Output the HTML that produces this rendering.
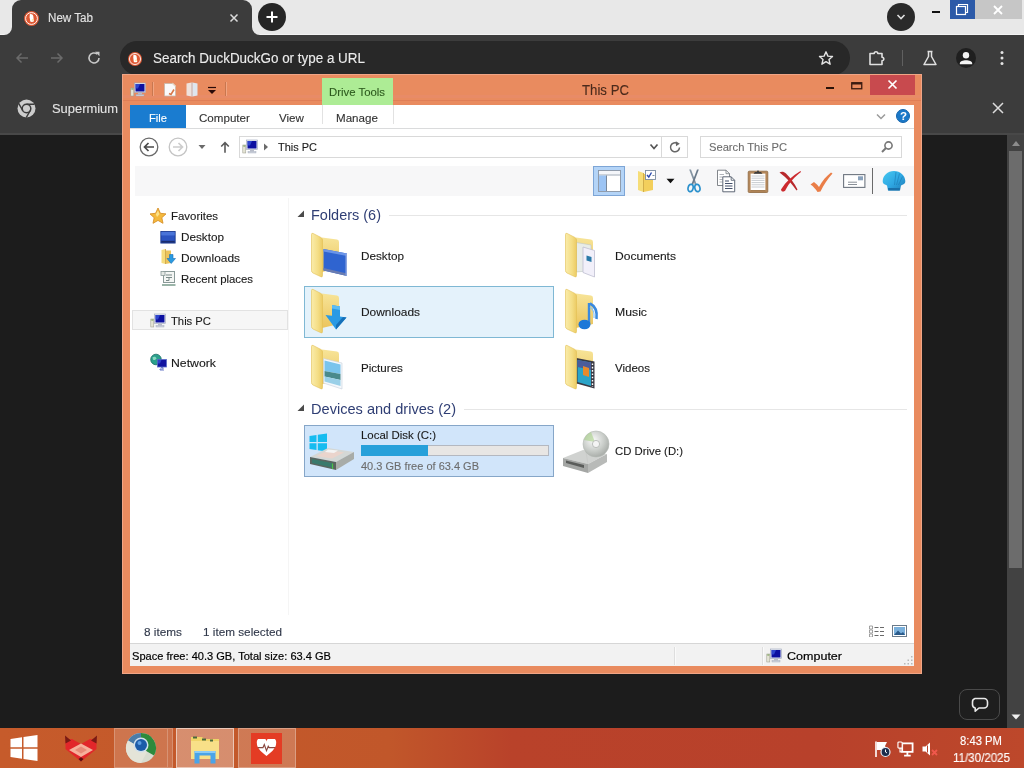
<!DOCTYPE html>
<html lang="en"><head><meta charset="utf-8"><title>This PC</title><style>
html,body{margin:0;padding:0;}
body{width:1024px;height:768px;overflow:hidden;background:#1c1c1c;position:relative;font-family:"Liberation Sans", sans-serif;}
div,svg,span{position:absolute;box-sizing:border-box;}
span{white-space:nowrap;line-height:1;transform-origin:0 50%;-webkit-text-stroke:0.12px currentColor;}
#root{left:0;top:0;width:1024px;height:768px;will-change:transform;overflow:hidden;}
</style></head>
<body>
<div id="root">
<!-- browser window -->
<div style="left:0px;top:0px;width:1024px;height:35px;background:#e8e8e8;"></div>
<div style="left:0px;top:34px;width:1024px;height:1px;background:#f3f3f3;"></div>
<div style="left:12px;top:0px;width:240px;height:35px;background:#3c3c3c;border-radius:9px 9px 0 0;"></div>
<svg style="left:4px;top:27px;" width="8" height="8" viewBox="0 0 8 8"><path d="M8 0V8H0A8 8 0 0 0 8 0Z" fill="#3c3c3c"/></svg>
<svg style="left:252px;top:27px;" width="8" height="8" viewBox="0 0 8 8"><path d="M0 0V8H8A8 8 0 0 1 0 0Z" fill="#3c3c3c"/></svg>
<div style="left:0px;top:35px;width:1024px;height:100px;background:#3c3c3c;"></div>
<div style="left:0px;top:133px;width:1024px;height:2px;background:#484848;"></div>
<svg style="left:24px;top:10.5px;" width="15" height="15" viewBox="0 0 16 16"><circle cx="8" cy="8" r="8" fill="#de5833"/><circle cx="8" cy="8" r="6.3" fill="none" stroke="#fff" stroke-width="1"/><path d="M6.2 3.4c1.6-.6 3.4.3 3.7 2l.7 5.6c-1.2.8-2.7.9-3.9.3L6 6.600z" fill="#fff"/><path d="M8.300 9.200l1.800-.5.200.8-1.900.6z" fill="#fbd04b"/></svg>
<span style="left:48px;top:11.84px;font-size:12px;color:#e4e4e4;transform:scaleX(0.9681);">New Tab</span>
<svg style="left:228px;top:12px;" width="12" height="12" viewBox="0 0 12 12"><path d="M2.500 2.500L9.500 9.500M9.500 2.500L2.500 9.500" stroke="#dcdcdc" stroke-width="1.500" fill="none"/></svg>
<div style="left:258px;top:3px;width:28px;height:28px;background:#262626;border-radius:50%;"></div>
<svg style="left:265px;top:10px;" width="14" height="14" viewBox="0 0 14 14"><path d="M7 1.500V12.500M1.500 7H12.500" stroke="#fff" stroke-width="2" fill="none"/></svg>
<div style="left:887px;top:3px;width:28px;height:28px;background:#2a2a2a;border-radius:50%;"></div>
<svg style="left:895px;top:12px;" width="12" height="10" viewBox="0 0 12 10"><path d="M2.500 3L6 6.500L9.500 3" stroke="#e0e0e0" stroke-width="1.600" fill="none"/></svg>
<div style="left:932px;top:11px;width:8px;height:2px;background:#111;"></div>
<div style="left:950px;top:0px;width:25px;height:19px;background:#2c5aa8;"></div>
<svg style="left:955px;top:3px;" width="14" height="13" viewBox="0 0 14 13"><path d="M3.500 3.500V1.500H12.500V9.500H10.500" stroke="#fff" stroke-width="1.200" fill="none"/><rect x="1.500" y="3.500" width="9" height="8" stroke="#fff" stroke-width="1.200" fill="none"/></svg>
<div style="left:975px;top:0px;width:47px;height:19px;background:#c6c6c6;"></div>
<svg style="left:992px;top:4px;" width="12" height="12" viewBox="0 0 12 12"><path d="M2 2L10 10M10 2L2 10" stroke="#fff" stroke-width="1.800" fill="none"/></svg>
<svg style="left:14px;top:50px;" width="16" height="16" viewBox="0 0 16 16"><path d="M14 8H3M7.500 3.500L3 8L7.500 12.500" stroke="#6b6b6b" stroke-width="1.500" fill="none"/></svg>
<svg style="left:49px;top:50px;" width="16" height="16" viewBox="0 0 16 16"><path d="M2 8H13M8.500 3.500L13 8L8.500 12.500" stroke="#6b6b6b" stroke-width="1.500" fill="none"/></svg>
<svg style="left:86px;top:50px;" width="16" height="16" viewBox="0 0 16 16"><path d="M13 8A5 5 0 1 1 11.300 4.200" stroke="#c8c8c8" stroke-width="1.600" fill="none"/><path d="M9 1.800H13.500V6.300z" fill="#c8c8c8"/></svg>
<div style="left:120px;top:41px;width:730px;height:34px;background:#282828;border-radius:17px;"></div>
<svg style="left:128px;top:51.5px;" width="14" height="14" viewBox="0 0 16 16"><circle cx="8" cy="8" r="8" fill="#de5833"/><circle cx="8" cy="8" r="6.3" fill="none" stroke="#fff" stroke-width="1"/><path d="M6.2 3.4c1.6-.6 3.4.3 3.7 2l.7 5.6c-1.2.8-2.7.9-3.9.3L6 6.600z" fill="#fff"/><path d="M8.300 9.200l1.800-.5.200.8-1.900.6z" fill="#fbd04b"/></svg>
<span style="left:153px;top:51.15px;font-size:14px;color:#ececec;transform:scaleX(0.9593);">Search DuckDuckGo or type a URL</span>
<svg style="left:818px;top:50px;" width="16" height="16" viewBox="0 0 16 16"><path d="M8 1.800L9.900 6.100L14.500 6.500L11 9.600L12.100 14.200L8 11.700L3.900 14.200L5 9.600L1.500 6.500L6.100 6.100Z" stroke="#e4e4e4" stroke-width="1.400" fill="none" stroke-linejoin="round"/></svg>
<svg style="left:867px;top:49px;" width="18" height="18" viewBox="0 0 18 18"><path d="M3 4.500H7.200A1.800 1.800 0 0 1 10.800 4.500H15V8.200A1.800 1.800 0 0 1 15 11.800V15.500H3Z" stroke="#e0e0e0" stroke-width="1.600" fill="none" stroke-linejoin="round"/></svg>
<div style="left:902px;top:50px;width:1px;height:16px;background:#606060;"></div>
<svg style="left:921px;top:49px;" width="18" height="18" viewBox="0 0 18 18"><path d="M6.500 2.500H11.500M7.500 2.500V7.500L3 15.500H15L10.500 7.500V2.500" stroke="#e0e0e0" stroke-width="1.500" fill="none" stroke-linejoin="round"/></svg>
<div style="left:956px;top:48px;width:20px;height:20px;background:#1f1f1f;border-radius:50%;"></div>
<svg style="left:956px;top:48px;" width="20" height="20" viewBox="0 0 20 20"><circle cx="10" cy="7.200" r="3.200" fill="#f4f4f4"/><path d="M3.800 15.500C3.800 11.200 16.200 11.200 16.200 15.500V16.200H3.800Z" fill="#f4f4f4"/></svg>
<svg style="left:999px;top:50px;" width="6" height="16" viewBox="0 0 6 16"><circle cx="3" cy="2.500" r="1.500" fill="#e4e4e4"/><circle cx="3" cy="8" r="1.500" fill="#e4e4e4"/><circle cx="3" cy="13.500" r="1.500" fill="#e4e4e4"/></svg>
<svg style="left:17px;top:98.5px;" width="19" height="19" viewBox="0 0 19 19"><circle cx="9.500" cy="9.500" r="9" fill="#cdcdcd"/><circle cx="9.500" cy="9.500" r="4.300" fill="#cdcdcd" stroke="#3c3c3c" stroke-width="1.500"/><path d="M9.500 5.200H17.500M5.800 11.650L1.800 4.700M13.200 11.650L9.200 18.600" stroke="#3c3c3c" stroke-width="1.400" fill="none"/></svg>
<span style="left:52px;top:102.00px;font-size:13px;color:#e4e4e4;transform:scaleX(0.9929);">Supermium</span>
<svg style="left:991px;top:101px;" width="14" height="14" viewBox="0 0 14 14"><path d="M2 2L12 12M12 2L2 12" stroke="#dcdcdc" stroke-width="1.500" fill="none"/></svg>
<div style="left:0px;top:135px;width:1008px;height:593px;background:#1c1c1c;"></div>
<div style="left:1007px;top:135px;width:17px;height:593px;background:#424242;"></div>
<svg style="left:1008px;top:138px;" width="16" height="10" viewBox="0 0 16 10"><path d="M4 8L8 3L12 8Z" fill="#8c8c8c"/></svg>
<div style="left:1009px;top:151px;width:13px;height:417px;background:#6c6c6c;"></div>
<svg style="left:1008px;top:712px;" width="16" height="10" viewBox="0 0 16 10"><path d="M3.500 2.500L8 7.500L12.500 2.500Z" fill="#f0f0f0"/></svg>
<div style="left:959px;top:689px;width:41px;height:31px;border:1px solid #4a4a4a;border-radius:8px;background:#1e1e1e;"></div>
<svg style="left:970px;top:695px;" width="20" height="20" viewBox="0 0 20 20"><path d="M5 3.500H14A3.500 3.500 0 0 1 17.500 7V9.500A3.500 3.500 0 0 1 14 13H9L5.200 16.200V13A3.500 3.500 0 0 1 2.500 9.500V7A3.500 3.500 0 0 1 5 3.500Z" stroke="#e8e8e8" stroke-width="1.600" fill="none" stroke-linejoin="round"/></svg>
<!-- explorer window -->
<div style="left:122px;top:74px;width:800px;height:600px;background:#e98b5f;box-shadow:inset 0 0 0 1px #f0a586;"></div>
<div style="left:123px;top:100px;width:798px;height:1px;background:#e07e56;"></div>
<div style="left:123px;top:95px;width:798px;height:3px;background:#e88c6c;opacity:.6;"></div>
<div style="left:130px;top:105px;width:784px;height:561px;background:#fff;"></div>
<svg style="left:129.5px;top:82px;" width="16.0" height="15.0" viewBox="0 0 16 15"><rect x="0.800" y="6" width="3" height="8" fill="#e4e4d4" stroke="#9a9a8a" stroke-width=".5"/><rect x="1.300" y="6.500" width="2" height="1" fill="#6a9a4a"/><rect x="4.500" y="1" width="11" height="9.500" fill="#e8ecf4" stroke="#9aa4b8" stroke-width=".6"/><rect x="5.500" y="2" width="9" height="7.500" fill="#0c10a0"/><path d="M5.500 2H10L8 6.500H5.500Z" fill="#3c5ce0" opacity=".7"/><rect x="8" y="11" width="4" height="1.500" fill="#b8bcc8"/><rect x="6" y="12.500" width="8" height="1.500" fill="#d0d4dc" stroke="#9aa4b8" stroke-width=".4"/></svg>
<div style="left:152px;top:82px;width:1px;height:14px;background:#c9774f;"></div>
<div style="left:153px;top:82px;width:1px;height:14px;background:#f2a582;"></div>
<svg style="left:162px;top:81px;" width="16" height="17" viewBox="0 0 16 17"><path d="M2.500 2.500H11L13.500 5V15H2.500Z" fill="#fafafa" stroke="#c8b8a8" stroke-width=".8"/><path d="M10.500 1.500L13.500 4.500V6L10.500 3.500Z" fill="#e6d8c8"/><path d="M7 12.500L9 13.500L12 8.500" stroke="#d87848" stroke-width="1.600" fill="none"/></svg>
<svg style="left:185px;top:81px;" width="14" height="17" viewBox="0 0 14 17"><path d="M1.500 2.500L6.500 1.500V15.500L1.500 14.500Z" fill="#efe2dc"/><path d="M7.500 1.500L12.500 2.500V14.500L7.500 15.500Z" fill="#dfe6ee"/><path d="M6.500 1.500H7.500V15.500H6.500Z" fill="#c8d4e4"/></svg>
<svg style="left:207px;top:86px;" width="10" height="9" viewBox="0 0 10 9"><path d="M1 1.500H9" stroke="#2a0a08" stroke-width="1.200"/><path d="M1 4H9L5 8Z" fill="#2a0a08"/></svg>
<div style="left:225px;top:82px;width:1px;height:14px;background:#c9774f;"></div>
<div style="left:226px;top:82px;width:1px;height:14px;background:#f2a582;"></div>
<div style="left:322px;top:78px;width:71px;height:27px;background:#adec95;"></div>
<span style="left:329px;top:86.18px;font-size:11.6px;color:#2d5a1e;transform:scaleX(0.9800);">Drive Tools</span>
<span style="left:582px;top:82.30px;font-size:15px;color:#4a2a1c;transform:scaleX(0.8811);">This PC</span>
<div style="left:826px;top:87px;width:8px;height:2px;background:#2a1208;"></div>
<svg style="left:851px;top:82px;" width="12" height="8" viewBox="0 0 12 8"><rect x="0.750" y="0.750" width="10" height="6" fill="none" stroke="#3a1a10" stroke-width="1.300"/><rect x="0.750" y="0.500" width="10" height="2" fill="#3a1a10"/></svg>
<div style="left:870px;top:75px;width:45px;height:20px;background:#c84a4e;"></div>
<svg style="left:887px;top:79px;" width="11" height="11" viewBox="0 0 11 11"><path d="M1.500 1.500L9.500 9.500M9.500 1.500L1.500 9.500" stroke="#fff" stroke-width="1.700" fill="none"/></svg>
<div style="left:130px;top:105px;width:56px;height:23px;background:#1a7cd0;"></div>
<span style="left:149px;top:112.18px;font-size:11.6px;color:#fff;transform:scaleX(0.9632);">File</span>
<span style="left:199px;top:112.18px;font-size:11.6px;color:#333;">Computer</span>
<span style="left:279px;top:112.18px;font-size:11.6px;color:#333;">View</span>
<span style="left:336px;top:112.18px;font-size:11.6px;color:#333;">Manage</span>
<div style="left:322px;top:105px;width:1px;height:19px;background:#e2e2e2;"></div>
<div style="left:393px;top:105px;width:1px;height:19px;background:#e2e2e2;"></div>
<div style="left:130px;top:128px;width:784px;height:1px;background:#dadbdc;"></div>
<svg style="left:875px;top:112px;" width="12" height="9" viewBox="0 0 12 9"><path d="M2 2.500L6 6.500L10 2.500" stroke="#9a9a9a" stroke-width="1.500" fill="none"/></svg>
<div style="left:896px;top:109px;width:14px;height:14px;background:#1a78c8;border-radius:50%;border:1px solid #1464ac;"></div>
<span style="left:900px;top:110.77px;font-size:11.5px;color:#fff;font-weight:700;-webkit-text-stroke:0;">?</span>
<svg style="left:139px;top:137px;" width="20" height="20" viewBox="0 0 20 20"><circle cx="10" cy="10" r="8.800" fill="#fff" stroke="#6a6a6a" stroke-width="1.300"/><path d="M15 10H5.500M9.500 6L5.500 10L9.500 14" stroke="#4a4a4a" stroke-width="1.700" fill="none"/></svg>
<svg style="left:168px;top:137px;" width="20" height="20" viewBox="0 0 20 20"><circle cx="10" cy="10" r="8.800" fill="#fff" stroke="#c4c4c4" stroke-width="1.300"/><path d="M5 10H14.500M10.500 6L14.500 10L10.500 14" stroke="#cdcdcd" stroke-width="1.700" fill="none"/></svg>
<svg style="left:198px;top:144px;" width="8" height="6" viewBox="0 0 8 6"><path d="M0.500 1H7.500L4 5Z" fill="#6a6a6a"/></svg>
<svg style="left:218px;top:140px;" width="14" height="15" viewBox="0 0 14 15"><path d="M7 12.700V3M3.200 6.500L7 2.700L10.800 6.500" stroke="#5a5a5a" stroke-width="1.600" fill="none"/></svg>
<div style="left:239px;top:136px;width:423px;height:22px;background:#fff;border:1px solid #d9d9d9;"></div>
<div style="left:661px;top:136px;width:27px;height:22px;background:#fff;border:1px solid #d9d9d9;"></div>
<svg style="left:242px;top:139px;" width="16.0" height="15.0" viewBox="0 0 16 15"><rect x="0.800" y="6" width="3" height="8" fill="#e4e4d4" stroke="#9a9a8a" stroke-width=".5"/><rect x="1.300" y="6.500" width="2" height="1" fill="#6a9a4a"/><rect x="4.500" y="1" width="11" height="9.500" fill="#e8ecf4" stroke="#9aa4b8" stroke-width=".6"/><rect x="5.500" y="2" width="9" height="7.500" fill="#0c10a0"/><path d="M5.500 2H10L8 6.500H5.500Z" fill="#3c5ce0" opacity=".7"/><rect x="8" y="11" width="4" height="1.500" fill="#b8bcc8"/><rect x="6" y="12.500" width="8" height="1.500" fill="#d0d4dc" stroke="#9aa4b8" stroke-width=".4"/></svg>
<svg style="left:263px;top:143px;" width="6" height="8" viewBox="0 0 6 8"><path d="M1 0.500L5 4L1 7.500Z" fill="#6a6a6a"/></svg>
<span style="left:278px;top:141.18px;font-size:11.6px;color:#1a1a1a;transform:scaleX(0.9458);">This PC</span>
<svg style="left:649px;top:143px;" width="10" height="8" viewBox="0 0 10 8"><path d="M1.500 1.500L5 5.500L8.500 1.500" stroke="#555" stroke-width="1.700" fill="none"/></svg>
<svg style="left:668px;top:140px;" width="14" height="14" viewBox="0 0 14 14"><path d="M11.500 7.500A4.500 4.500 0 1 1 9.500 3.600" stroke="#666" stroke-width="1.500" fill="none"/><path d="M7.800 1.200L11.800 3.800L8 6.200Z" fill="#666"/></svg>
<div style="left:700px;top:136px;width:202px;height:22px;background:#fff;border:1px solid #d9d9d9;"></div>
<span style="left:709px;top:141.18px;font-size:11.6px;color:#6d6d6d;transform:scaleX(0.9631);">Search This PC</span>
<svg style="left:880px;top:140px;" width="14" height="14" viewBox="0 0 14 14"><circle cx="8.500" cy="5.500" r="3.600" fill="none" stroke="#777" stroke-width="1.600"/><path d="M6 8L2 12" stroke="#777" stroke-width="2"/></svg>
<div style="left:135px;top:166px;width:779px;height:30px;background:#f7f7f8;"></div>
<div style="left:593px;top:166px;width:32px;height:30px;background:#b4d4f7;border:1px solid #7da5d6;"></div>
<svg style="left:598px;top:170px;" width="23" height="22" viewBox="0 0 23 22"><rect x="0.500" y="0.500" width="22" height="21" fill="#fff" stroke="#8894a4" stroke-width=".9"/><rect x="1" y="1" width="21" height="3.500" fill="#f4f6fa"/><path d="M1 5H22" stroke="#8894a4" stroke-width=".8"/><rect x="1" y="5.500" width="7" height="15.500" fill="#9cc4f4"/><path d="M8.500 5.500V21" stroke="#6a7a90" stroke-width=".9"/></svg>
<svg style="left:636px;top:169px;" width="22" height="24" viewBox="0 0 22 24"><path d="M2 2L7.500 4V23L2 21Z" fill="#f6dd78"/><path d="M7.500 5H17V21L7.500 23Z" fill="#f3cf5c"/><path d="M7.500 4V23" stroke="#c9a23a" stroke-width=".8"/><rect x="9.500" y="1.500" width="10" height="9" fill="#fff" stroke="#7a8ca0" stroke-width=".9"/><path d="M11 6L12.800 8L15.500 3.500" stroke="#2a4ab0" stroke-width="1.400" fill="none"/><path d="M16.500 6.500H18.500" stroke="#7a8ca0" stroke-width="1"/></svg>
<svg style="left:666px;top:178px;" width="9" height="6" viewBox="0 0 9 6"><path d="M0.500 0.800H8.500L4.500 5.200Z" fill="#111"/></svg>
<svg style="left:686px;top:169px;" width="16" height="24" viewBox="0 0 16 24"><path d="M3.200 0.500L5 0.500L10.500 15L9 16Z" fill="#8494a2"/><path d="M12.800 0.500L11 0.500L5.500 15L7 16Z" fill="#6a7a8a"/><ellipse cx="4.600" cy="19" rx="2.500" ry="3.700" fill="none" stroke="#2a90cc" stroke-width="1.700" transform="rotate(14 4.600 19)"/><ellipse cx="11.400" cy="19" rx="2.500" ry="3.700" fill="none" stroke="#2a90cc" stroke-width="1.700" transform="rotate(-14 11.400 19)"/></svg>
<svg style="left:716px;top:169px;" width="20" height="24" viewBox="0 0 20 24"><path d="M1.500 1.200H10L13.500 4.700V16.500H1.500Z" fill="#fff" stroke="#74787e" stroke-width=".9"/><path d="M10 1.200V4.700H13.500" fill="none" stroke="#74787e" stroke-width=".8"/><path d="M3.500 5.500H8M3.500 8H6.500M3.500 10.500H6.500M3.500 13H6.500" stroke="#a8acb2" stroke-width=".9"/><path d="M6.800 7.800H15.200L18.700 11.300V22.800H6.800Z" fill="#fff" stroke="#4e5868" stroke-width=".9"/><path d="M15.200 7.800V11.300H18.700" fill="none" stroke="#4e5868" stroke-width=".8"/><path d="M9 12H13M9 14.500H16.500M9 17H16.500M9 19.500H16.500" stroke="#44506a" stroke-width="1.100"/></svg>
<svg style="left:747px;top:169px;" width="22" height="24" viewBox="0 0 22 24"><rect x="1.200" y="2.200" width="19.600" height="21.300" rx="1" fill="#b4875a" stroke="#8e6840" stroke-width=".8"/><rect x="3.600" y="4.600" width="14.800" height="16.600" fill="#fff"/><path d="M4.500 7H17.500M4.500 9.200H17.500M4.500 11.400H17.500M4.500 13.600H17.500M4.500 15.800H17.500M4.500 18H17.500" stroke="#c2c6cc" stroke-width=".9"/><path d="M6.500 4.800L8 3H9.800L11 1L12.200 3H14L15.500 4.800Z" fill="#3c3c3c"/><rect x="3.600" y="21.200" width="14.800" height="1" fill="#9c7448"/></svg>
<svg style="left:778px;top:169px;" width="24" height="24" viewBox="0 0 24 24"><path d="M1.500 3.500C3.500 2 6 2.500 8 4.500C12.500 9 16.500 14.500 19.500 20.500L18.500 21.500C14.500 15.500 9 9 1.500 3.500Z" fill="#b8282c"/><path d="M22.500 2L23 3C17 7.500 11 14 7.500 21C7 22.500 5 23 3.500 22L3 20.500C8 12.500 14.500 6.500 22.500 2Z" fill="#cc2a2e"/></svg>
<svg style="left:809px;top:169px;" width="25" height="24" viewBox="0 0 25 24"><path d="M1.500 15.500L5 13C7 14.500 8.500 16 10 18C13 12 17.500 7 22 3.500L23.500 4.500C18.500 10 14.500 16 11.500 22.500L8.500 23C6.500 20 4.500 17.500 1.500 15.500Z" fill="#ea7e48"/></svg>
<svg style="left:843px;top:174px;" width="23" height="14" viewBox="0 0 23 14"><rect x="0.600" y="0.600" width="21.300" height="12.800" fill="#fff" stroke="#6e7680" stroke-width="1.100"/><rect x="15" y="2.300" width="5" height="4" fill="#8aa2bc"/><path d="M5 8.200H14M5 10.500H14" stroke="#8a9098" stroke-width="1"/></svg>
<div style="left:872px;top:168px;width:1px;height:26px;background:#6a6a6a;"></div>
<svg style="left:882px;top:170px;" width="24" height="22" viewBox="0 0 24 22"><defs><linearGradient id="sh" x1="0" y1="0" x2="1" y2="1"><stop offset="0" stop-color="#46c8f0"/><stop offset=".55" stop-color="#2ea6e2"/><stop offset="1" stop-color="#1e7ab4"/></linearGradient></defs><path d="M12 1C18.500 1 23 5.500 23.300 11C23.400 12.800 22.500 14 21 14.500L19 15.500L18 20.500H6L5 15.500L3 14.500C1.500 14 0.600 12.800 0.700 11C1 5.500 5.500 1 12 1Z" fill="url(#sh)"/><path d="M14 2L12.500 15M17.500 3.500L14.500 15M20.500 6.500L16.500 15" stroke="#1a78b0" stroke-width=".8" opacity=".7" fill="none"/><path d="M6 18H18L17.600 20.500H6.400Z" fill="#1a70aa"/></svg>
<div style="left:288px;top:198px;width:1px;height:417px;background:#f5f5f5;"></div>
<!-- navigation pane -->
<svg style="left:149px;top:207px;" width="18" height="17" viewBox="0 0 18 17"><path d="M9 1L11.400 6.300L17 6.900L12.800 10.700L14 16.300L9 13.400L4 16.300L5.200 10.700L1 6.900L6.600 6.300Z" fill="#f4b93c" stroke="#d8922a" stroke-width=".9" stroke-linejoin="round"/><path d="M9 3.500L10.500 7.200L8 10L6.800 7.200Z" fill="#fde28a"/></svg>
<span style="left:171px;top:210.18px;font-size:11.6px;color:#1a1a1a;transform:scaleX(0.9856);">Favorites</span>
<svg style="left:160px;top:231px;" width="16" height="12.5" viewBox="0 0 17 14"><rect x="0.500" y="0.500" width="16" height="13" fill="#2c54c0" stroke="#1c3a8c"/><rect x="1" y="1" width="15" height="4" fill="#4a74d8"/><rect x="1" y="11" width="15" height="2" fill="#1a2c6c"/></svg>
<span style="left:181px;top:231.18px;font-size:11.6px;color:#1a1a1a;transform:scaleX(1.0110);">Desktop</span>
<svg style="left:160px;top:248px;" width="17" height="17" viewBox="0 0 17 17"><path d="M1.500 2L5.500 1V16L1.500 15Z" fill="#f6dc7c"/><path d="M5.500 2.500H11V15L5.500 16Z" fill="#ecc45c"/><path d="M5.500 1V16" stroke="#c49a34" stroke-width=".7"/><path d="M9.500 6.500H13V10.500H15.500L11.200 15.500L7 10.500H9.500Z" fill="#2a9ae0" stroke="#1a70b8" stroke-width=".6"/></svg>
<span style="left:181px;top:252.18px;font-size:11.6px;color:#1a1a1a;transform:scaleX(1.0286);">Downloads</span>
<svg style="left:160px;top:270px;" width="17" height="17" viewBox="0 0 17 17"><rect x="3.500" y="1.500" width="11" height="11" fill="#f4f6f4" stroke="#8a9a98" stroke-width="1"/><rect x="1" y="1.500" width="4" height="4" fill="#e4e8e4" stroke="#8a9a98" stroke-width=".8"/><path d="M6 5H12M6 7.500H12M9 7.500V10.500H6" stroke="#7a8a88" stroke-width="1" fill="none"/><path d="M2 14H15.500V16H2Z" fill="#9ab4a8"/></svg>
<span style="left:181px;top:273.18px;font-size:11.6px;color:#1a1a1a;transform:scaleX(0.9800);">Recent places</span>
<div style="left:132px;top:310px;width:156px;height:20px;background:#f6f6f6;border:1px solid #e2e2e2;"></div>
<svg style="left:150px;top:313px;" width="16.0" height="15.0" viewBox="0 0 16 15"><rect x="0.800" y="6" width="3" height="8" fill="#e4e4d4" stroke="#9a9a8a" stroke-width=".5"/><rect x="1.300" y="6.500" width="2" height="1" fill="#6a9a4a"/><rect x="4.500" y="1" width="11" height="9.500" fill="#e8ecf4" stroke="#9aa4b8" stroke-width=".6"/><rect x="5.500" y="2" width="9" height="7.500" fill="#0c10a0"/><path d="M5.500 2H10L8 6.500H5.500Z" fill="#3c5ce0" opacity=".7"/><rect x="8" y="11" width="4" height="1.500" fill="#b8bcc8"/><rect x="6" y="12.500" width="8" height="1.500" fill="#d0d4dc" stroke="#9aa4b8" stroke-width=".4"/></svg>
<span style="left:171px;top:315.18px;font-size:11.6px;color:#1a1a1a;transform:scaleX(0.9701);">This PC</span>
<svg style="left:150px;top:353px;" width="17" height="18" viewBox="0 0 17 18"><circle cx="6" cy="6.500" r="5.300" fill="#2aa08c" stroke="#1a6c64" stroke-width=".8"/><path d="M2.500 4.500C4 3 6 3.500 6.500 5.500C5.500 7 4 7.500 3 6.500Z" fill="#8ad8c0"/><rect x="7.500" y="6.500" width="9" height="7.500" fill="#1214a0" stroke="#5a6cc8" stroke-width=".8"/><path d="M8 7H11.500L10 10.500H8Z" fill="#3c54dc" opacity=".7"/><path d="M11 14.500H13V16H10V17H14" stroke="#6a7ac8" stroke-width="1" fill="none"/></svg>
<span style="left:171px;top:357.18px;font-size:11.6px;color:#1a1a1a;transform:scaleX(1.0580);">Network</span>
<!-- file list -->
<svg style="left:297px;top:210px;" width="8" height="8" viewBox="0 0 8 8"><path d="M7 0.500V7H0.500Z" fill="#4a4a4a"/></svg>
<span style="left:311px;top:207.30px;font-size:15px;color:#2f3e74;transform:scaleX(0.9651);-webkit-text-stroke:0;">Folders (6)</span>
<div style="left:389px;top:215px;width:518px;height:1px;background:#e6e6e6;"></div>
<svg style="left:297px;top:404px;" width="8" height="8" viewBox="0 0 8 8"><path d="M7 0.500V7H0.500Z" fill="#4a4a4a"/></svg>
<span style="left:311px;top:401.30px;font-size:15px;color:#2f3e74;transform:scaleX(0.9716);-webkit-text-stroke:0;">Devices and drives (2)</span>
<div style="left:464px;top:409px;width:443px;height:1px;background:#e6e6e6;"></div>
<div style="left:304px;top:286px;width:250px;height:52px;background:#e4f2fb;border:1px solid #7fb8d4;"></div>
<div style="left:304px;top:425px;width:250px;height:52px;background:#d1e5fa;border:1px solid #86a6c8;"></div>
<svg style="left:310px;top:232px;" width="48" height="48" viewBox="0 0 48 48"><defs><linearGradient id="ff" x1="0" y1="0" x2="1" y2="0"><stop offset="0" stop-color="#faecaa"/><stop offset=".6" stop-color="#f4dd84"/><stop offset="1" stop-color="#eccb64"/></linearGradient><linearGradient id="fb" x1="0" y1="0" x2="0" y2="1"><stop offset="0" stop-color="#f7e498"/><stop offset="1" stop-color="#ebc45c"/></linearGradient></defs><path d="M12 5.500L27 7.500Q29 7.800 29 10V36L12 40Z" fill="url(#fb)"/><path d="M13.500 17L37 21.500V44L13.500 38.500Z" fill="#2f64d0"/><path d="M13.500 17L37 21.500V24L13.500 19.500Z" fill="#6a94e8"/><path d="M13.500 36L37 41.500V44L13.500 38.500Z" fill="#6a7cb0"/><path d="M35.500 21.200L37 21.500V44L35.500 43.700Z" fill="#8aa4e0"/><path d="M1.500 2.500Q1.500 0.800 3 1.400L11 5.500Q12.500 6.300 12.500 8V43.500Q12.500 45.500 11 44.800L3 41Q1.500 40.300 1.500 38.500Z" fill="url(#ff)" stroke="#e2bf52" stroke-width=".6"/></svg>
<span style="left:361px;top:250.18px;font-size:11.6px;color:#1a1a1a;transform:scaleX(1.0110);">Desktop</span>
<svg style="left:564px;top:232px;" width="48" height="48" viewBox="0 0 48 48"><defs><linearGradient id="ff" x1="0" y1="0" x2="1" y2="0"><stop offset="0" stop-color="#faecaa"/><stop offset=".6" stop-color="#f4dd84"/><stop offset="1" stop-color="#eccb64"/></linearGradient><linearGradient id="fb" x1="0" y1="0" x2="0" y2="1"><stop offset="0" stop-color="#f7e498"/><stop offset="1" stop-color="#ebc45c"/></linearGradient></defs><path d="M12 5.500L27 7.500Q29 7.800 29 10V36L12 40Z" fill="url(#fb)"/><path d="M12.500 10.500L27 13V38.500L12.500 40Z" fill="#e8ece8" stroke="#c0c8c4" stroke-width=".6"/><path d="M19 15L30.500 18.500V45L19 40.500Z" fill="#f2f0fa" stroke="#b8b8cc" stroke-width=".7"/><path d="M22.500 23.500L27.500 25V30L22.500 28.500Z" fill="#2a7aa8"/><path d="M1.500 2.500Q1.500 0.800 3 1.400L11 5.500Q12.500 6.300 12.500 8V43.500Q12.500 45.500 11 44.800L3 41Q1.500 40.300 1.500 38.500Z" fill="url(#ff)" stroke="#e2bf52" stroke-width=".6"/></svg>
<span style="left:615px;top:250.18px;font-size:11.6px;color:#1a1a1a;transform:scaleX(1.0402);">Documents</span>
<svg style="left:310px;top:288px;" width="48" height="48" viewBox="0 0 48 48"><defs><linearGradient id="ff" x1="0" y1="0" x2="1" y2="0"><stop offset="0" stop-color="#faecaa"/><stop offset=".6" stop-color="#f4dd84"/><stop offset="1" stop-color="#eccb64"/></linearGradient><linearGradient id="fb" x1="0" y1="0" x2="0" y2="1"><stop offset="0" stop-color="#f7e498"/><stop offset="1" stop-color="#ebc45c"/></linearGradient></defs><path d="M12 5.500L27 7.500Q29 7.800 29 10V36L12 40Z" fill="url(#fb)"/><path d="M22 17L30 18.500V28.500L36.500 29.500L26 41.500L15.500 27L22 27.800Z" fill="#2a9ae4"/><path d="M22 17L30 18.500V22L22 20.500Z" fill="#5cbcf4"/><path d="M26 41.500L36.500 29.500L33 29L26 37Z" fill="#1670b8"/><path d="M1.500 2.500Q1.500 0.800 3 1.400L11 5.500Q12.500 6.300 12.500 8V43.500Q12.500 45.500 11 44.800L3 41Q1.500 40.300 1.500 38.500Z" fill="url(#ff)" stroke="#e2bf52" stroke-width=".6"/></svg>
<span style="left:361px;top:306.18px;font-size:11.6px;color:#1a1a1a;transform:scaleX(1.0286);">Downloads</span>
<svg style="left:564px;top:288px;" width="48" height="48" viewBox="0 0 48 48"><defs><linearGradient id="ff" x1="0" y1="0" x2="1" y2="0"><stop offset="0" stop-color="#faecaa"/><stop offset=".6" stop-color="#f4dd84"/><stop offset="1" stop-color="#eccb64"/></linearGradient><linearGradient id="fb" x1="0" y1="0" x2="0" y2="1"><stop offset="0" stop-color="#f7e498"/><stop offset="1" stop-color="#ebc45c"/></linearGradient></defs><path d="M12 5.500L27 7.500Q29 7.800 29 10V36L12 40Z" fill="url(#fb)"/><path d="M26 15.500C31 18 33.500 23 32.500 31" stroke="#3a8ae0" stroke-width="2.600" fill="none"/><path d="M25 15V36" stroke="#3a8ae0" stroke-width="2.400"/><ellipse cx="20.500" cy="36.500" rx="6" ry="4.800" fill="#1c78d8"/><path d="M26 19C29 21 30.500 25 30 30" stroke="#8ac4f4" stroke-width="1.200" fill="none"/><path d="M1.500 2.500Q1.500 0.800 3 1.400L11 5.500Q12.500 6.300 12.500 8V43.500Q12.500 45.500 11 44.800L3 41Q1.500 40.300 1.500 38.500Z" fill="url(#ff)" stroke="#e2bf52" stroke-width=".6"/></svg>
<span style="left:615px;top:306.18px;font-size:11.6px;color:#1a1a1a;transform:scaleX(1.0568);">Music</span>
<svg style="left:310px;top:344px;" width="48" height="48" viewBox="0 0 48 48"><defs><linearGradient id="ff" x1="0" y1="0" x2="1" y2="0"><stop offset="0" stop-color="#faecaa"/><stop offset=".6" stop-color="#f4dd84"/><stop offset="1" stop-color="#eccb64"/></linearGradient><linearGradient id="fb" x1="0" y1="0" x2="0" y2="1"><stop offset="0" stop-color="#f7e498"/><stop offset="1" stop-color="#ebc45c"/></linearGradient></defs><path d="M12 5.500L27 7.500Q29 7.800 29 10V36L12 40Z" fill="url(#fb)"/><path d="M13.500 14.500L32 19V45L13.500 39Z" fill="#f4f8fc" stroke="#c8d0dc" stroke-width=".6"/><path d="M14.500 16.500L30.500 20.500V30L14.500 27Z" fill="#7ac4ec"/><path d="M14.500 27L30.500 30V36L14.500 32.500Z" fill="#4a8a8c"/><path d="M14.500 32.500L30.500 36V42L14.500 37.500Z" fill="#9ad0e8"/><path d="M1.500 2.500Q1.500 0.800 3 1.400L11 5.500Q12.500 6.300 12.500 8V43.500Q12.500 45.500 11 44.800L3 41Q1.500 40.300 1.500 38.500Z" fill="url(#ff)" stroke="#e2bf52" stroke-width=".6"/></svg>
<span style="left:361px;top:362.18px;font-size:11.6px;color:#1a1a1a;">Pictures</span>
<svg style="left:564px;top:344px;" width="48" height="48" viewBox="0 0 48 48"><defs><linearGradient id="ff" x1="0" y1="0" x2="1" y2="0"><stop offset="0" stop-color="#faecaa"/><stop offset=".6" stop-color="#f4dd84"/><stop offset="1" stop-color="#eccb64"/></linearGradient><linearGradient id="fb" x1="0" y1="0" x2="0" y2="1"><stop offset="0" stop-color="#f7e498"/><stop offset="1" stop-color="#ebc45c"/></linearGradient></defs><path d="M12 5.500L27 7.500Q29 7.800 29 10V36L12 40Z" fill="url(#fb)"/><path d="M12.500 14L30.500 17.500V44.500L12.500 39.500Z" fill="#3a3a44"/><path d="M13.500 16L27 18.500V42L13.500 38Z" fill="#2aa4c8"/><path d="M13.500 16L27 18.500V26L13.500 23Z" fill="#4a5c9c"/><path d="M19 22L25 24V33L19 31Z" fill="#e88a2c"/><path d="M28.500 19.500V43" stroke="#fff" stroke-width="1.400" stroke-dasharray="1.600 1.700"/><path d="M1.500 2.500Q1.500 0.800 3 1.400L11 5.500Q12.500 6.300 12.500 8V43.500Q12.500 45.500 11 44.800L3 41Q1.500 40.300 1.500 38.500Z" fill="url(#ff)" stroke="#e2bf52" stroke-width=".6"/></svg>
<span style="left:615px;top:362.18px;font-size:11.6px;color:#1a1a1a;transform:scaleX(0.9929);">Videos</span>
<svg style="left:308px;top:432px;" width="48" height="40" viewBox="0 0 48 40"><path d="M1.500 4L8.500 3V10H1.500ZM9.800 2.800L19 1.500V10H9.800ZM1.500 11.200H8.500V18L1.500 17ZM9.800 11.200H19V19.500L9.800 18.200Z" fill="#16bcf0"/><path d="M2 25L20 16L46 20L28 30Z" fill="#d4d8d6"/><path d="M8 24L21 18L36 20.500L24 26.500Z" fill="#ead4cc"/><path d="M20 17.500L30 18.500L26 21L17 20Z" fill="#f4f4f4"/><path d="M2 25L28 30V38L2 32Z" fill="#5a6660"/><path d="M4 27L24 31V35.500L4 31Z" fill="#3a7a6c"/><path d="M28 30L46 20V27L28 38Z" fill="#a8aca8"/><path d="M24.500 31.500V37" stroke="#4ac04a" stroke-width="1.200"/></svg>
<span style="left:361px;top:429.18px;font-size:11.6px;color:#1a1a1a;transform:scaleX(0.9864);">Local Disk (C:)</span>
<div style="left:361px;top:445px;width:188px;height:11px;background:#e8e6e4;border:1px solid #b4b8c0;"></div>
<div style="left:361px;top:445px;width:67px;height:11px;background:#26a0da;"></div>
<span style="left:361px;top:460.18px;font-size:11.6px;color:#6d6d6d;transform:scaleX(0.9486);">40.3 GB free of 63.4 GB</span>
<svg style="left:561px;top:430px;" width="50" height="46" viewBox="0 0 50 46"><defs><radialGradient id="cd" cx=".4" cy=".35" r=".7"><stop offset="0" stop-color="#fafafa"/><stop offset=".6" stop-color="#c8ccc8"/><stop offset="1" stop-color="#a4a8a4"/></radialGradient></defs><path d="M2 28L22 20L46 24L27 34Z" fill="#d0d2d0"/><path d="M2 28L27 34V43L2 36Z" fill="#a4a6a4"/><path d="M5 30.500L23 35V38L5 33Z" fill="#5a5c5a"/><path d="M27 34L46 24V32L27 43Z" fill="#b8bab8"/><ellipse cx="35" cy="14" rx="13" ry="13" fill="url(#cd)" stroke="#b4b8b4" stroke-width=".6"/><path d="M23 10A13 13 0 0 1 30 2L34 12Z" fill="#a8d088" opacity=".6"/><circle cx="35" cy="14" r="3.600" fill="#f4f4f4" stroke="#b0b4b0" stroke-width=".8"/><path d="M25 22L27 34" stroke="#888" stroke-width=".1"/></svg>
<span style="left:615px;top:445.18px;font-size:11.6px;color:#1a1a1a;transform:scaleX(0.9775);">CD Drive (D:)</span>
<!-- status -->
<span style="left:144px;top:626.18px;font-size:11.6px;color:#30384a;transform:scaleX(1.0167);">8 items</span>
<span style="left:203px;top:626.18px;font-size:11.6px;color:#30384a;transform:scaleX(1.0130);">1 item selected</span>
<svg style="left:869px;top:625px;" width="16" height="12" viewBox="0 0 16 12"><path d="M0.500 1H3.500V4H0.500ZM0.500 5H3.500V8H0.500ZM0.500 9H3.500V12H0.500Z" fill="#fff" stroke="#8a8a8a" stroke-width=".8"/><path d="M5.500 2.500H9.500M11 2.500H15M5.500 6.500H9.500M11 6.500H15M5.500 10.500H9.500M11 10.500H15" stroke="#6a6a6a" stroke-width="1"/></svg>
<svg style="left:892px;top:625px;" width="15" height="12" viewBox="0 0 15 12"><rect x="0.500" y="0.500" width="14" height="11" fill="#fff" stroke="#6a7a8a"/><rect x="2" y="2" width="11" height="8" fill="#7ab0dc"/><path d="M2 10L6 5.500L9 8.500L11 7L13 10Z" fill="#2a5a8a"/></svg>
<div style="left:130px;top:643px;width:784px;height:23px;background:#f2f2f2;"></div>
<div style="left:130px;top:643px;width:784px;height:1px;background:#d6d6d6;"></div>
<span style="left:132px;top:650.18px;font-size:11.6px;color:#000;transform:scaleX(0.9540);-webkit-text-stroke:0.2px #000;">Space free: 40.3 GB, Total size: 63.4 GB</span>
<div style="left:674px;top:647px;width:1px;height:18px;background:#dedede;"></div>
<div style="left:675px;top:647px;width:1px;height:18px;background:#fafafa;"></div>
<div style="left:762px;top:647px;width:1px;height:18px;background:#dedede;"></div>
<div style="left:763px;top:647px;width:1px;height:18px;background:#fafafa;"></div>
<svg style="left:766px;top:648px;" width="16.0" height="15.0" viewBox="0 0 16 15"><rect x="0.800" y="6" width="3" height="8" fill="#e4e4d4" stroke="#9a9a8a" stroke-width=".5"/><rect x="1.300" y="6.500" width="2" height="1" fill="#6a9a4a"/><rect x="4.500" y="1" width="11" height="9.500" fill="#e8ecf4" stroke="#9aa4b8" stroke-width=".6"/><rect x="5.500" y="2" width="9" height="7.500" fill="#0c10a0"/><path d="M5.500 2H10L8 6.500H5.500Z" fill="#3c5ce0" opacity=".7"/><rect x="8" y="11" width="4" height="1.500" fill="#b8bcc8"/><rect x="6" y="12.500" width="8" height="1.500" fill="#d0d4dc" stroke="#9aa4b8" stroke-width=".4"/></svg>
<span style="left:787px;top:650.18px;font-size:11.6px;color:#000;transform:scaleX(1.0804);-webkit-text-stroke:0.2px #000;">Computer</span>
<svg style="left:903px;top:655px;" width="10" height="10" viewBox="0 0 10 10"><path d="M8 1H9.500V2.500H8ZM8 4.500H9.500V6H8ZM4.500 4.500H6V6H4.500ZM8 8H9.500V9.500H8ZM4.500 8H6V9.500H4.500ZM1 8H2.500V9.500H1Z" fill="#b8b8b8"/></svg>
<!-- taskbar -->
<div style="left:0px;top:728px;width:1024px;height:40px;background:linear-gradient(90deg,#c65b2b 0%,#c1572a 38%,#b9422a 50%,#b8412b 80%,#bd482b 100%);"></div>
<svg style="left:10px;top:735px;" width="28" height="26" viewBox="0 0 28 26"><path d="M0.500 4L12 2.300V12.300H0.500ZM13.500 2.100L27.500 0V12.300H13.500ZM0.500 13.700H12V23.700L0.500 22ZM13.500 13.700H27.500V26L13.500 23.900Z" fill="#fff"/></svg>
<svg style="left:64px;top:734px;" width="34" height="28" viewBox="0 0 34 28"><path d="M1.500 6L8 5L17 10L26 5L32.500 6V15L17 27.500L1.500 15Z" fill="#e2262a"/><path d="M1 1.500L7 6.500L1.500 9.500Z M33 1.500L27 6.500L32.500 9.500Z" fill="#7a1a14"/><path d="M17 9.500L29 16L17 23L5 16Z" fill="#f6b09c"/><path d="M17 12.500L23 16L17 19.500L11 16Z" fill="#e88a78"/><path d="M14.500 25L17 27.500L19.500 25L17 23.300Z" fill="#5a1010"/></svg>
<div style="left:114px;top:728px;width:54px;height:40px;background:rgba(255,255,255,.17);border:1px solid rgba(255,255,255,.22);"></div>
<div style="left:168px;top:728px;width:5px;height:40px;background:rgba(255,255,255,.16);border:1px solid rgba(255,255,255,.2);border-left:0;"></div>
<svg style="left:125px;top:732px;" width="32" height="32" viewBox="0 0 32 32"><circle cx="16" cy="16" r="15" fill="#d8dcd0"/><path d="M16 1A15 15 0 0 1 29 23.500L16 16Z" fill="#2c8a3c"/><path d="M16 1A15 15 0 0 0 3 8.500L16 16Z" fill="#4a7ca8"/><path d="M3 8.500A15 15 0 0 0 16 31L22 20Z" fill="#e4e4d8"/><circle cx="16" cy="13" r="7.500" fill="#d0e0ec"/><circle cx="16" cy="13" r="6" fill="#1c5ca8"/><circle cx="14.500" cy="11" r="2" fill="#5a9ce0"/></svg>
<div style="left:176px;top:728px;width:58px;height:40px;background:rgba(255,255,255,.32);border:1px solid rgba(255,255,255,.5);"></div>
<svg style="left:190px;top:735px;" width="30" height="29" viewBox="0 0 30 29"><path d="M1 2H12L14 4H29V11H1Z" fill="#f0d468"/><path d="M1 6H29V24H1Z" fill="#f8e088"/><path d="M3 2.500H7M12 4.500H16M20 5.500H23" stroke="#4a6a3c" stroke-width="1.800"/><path d="M4.500 16H25.500V28.500H20.500V20.500H9.500V28.500H4.500Z" fill="#4aa4e8"/><path d="M4.500 16H25.500V18H4.500Z" fill="#8accf8"/></svg>
<div style="left:238px;top:728px;width:58px;height:40px;background:rgba(255,255,255,.2);border:1px solid rgba(255,255,255,.28);"></div>
<div style="left:251px;top:733px;width:31px;height:31px;background:#e43c24;"></div>
<svg style="left:256px;top:739px;" width="21" height="18" viewBox="0 2 24 20"><path d="M12 21C4 15 1 11 1 6.500A5.500 5.500 0 0 1 12 4.500A5.500 5.500 0 0 1 23 6.500C23 11 20 15 12 21Z" fill="#fff"/><path d="M2 11.500H8L9.500 8L12 15L14 10L15 11.500H22" stroke="#8a4840" stroke-width="1.300" fill="none"/></svg>
<svg style="left:874px;top:740px;" width="18" height="18" viewBox="0 0 18 18"><path d="M2 1.500V17" stroke="#fff" stroke-width="1.600"/><path d="M3 2H13L11 6L13 10H3Z" fill="#fff"/><circle cx="11.500" cy="12" r="4.500" fill="#1c2c4c" stroke="#e8f0f8" stroke-width="1.200"/><path d="M11.500 9.500V12L13 13" stroke="#fff" stroke-width="1" fill="none"/></svg>
<svg style="left:897px;top:741px;" width="17" height="17" viewBox="0 0 18 18"><rect x="5.500" y="2.500" width="11" height="9" fill="none" stroke="#fff" stroke-width="1.900"/><path d="M11 11.500V15M7.500 15.500H14.500" stroke="#fff" stroke-width="1.900"/><rect x="1" y="1" width="4.500" height="6.500" rx="1" fill="#b8402a" stroke="#fff" stroke-width="1.200"/><path d="M3.200 7.500V11.500H5.500" stroke="#fff" stroke-width="1.200" fill="none"/></svg>
<svg style="left:921px;top:740px;" width="18" height="18" viewBox="0 0 18 18"><path d="M1.500 6.500H4.500L9 2.500V15.500L4.500 11.500H1.500Z" fill="#fff"/><path d="M6.500 5.500V12.500" stroke="#b8402a" stroke-width="1"/><path d="M11 10L16 15M16 10L11 15" stroke="#f0584c" stroke-width="1.800"/></svg>
<span style="left:960px;top:734.84px;font-size:12px;color:#fff;transform:scaleX(0.9395);">8:43 PM</span>
<span style="left:953px;top:751.84px;font-size:12px;color:#fff;transform:scaleX(0.9633);">11/30/2025</span>
</div>
</body></html>
